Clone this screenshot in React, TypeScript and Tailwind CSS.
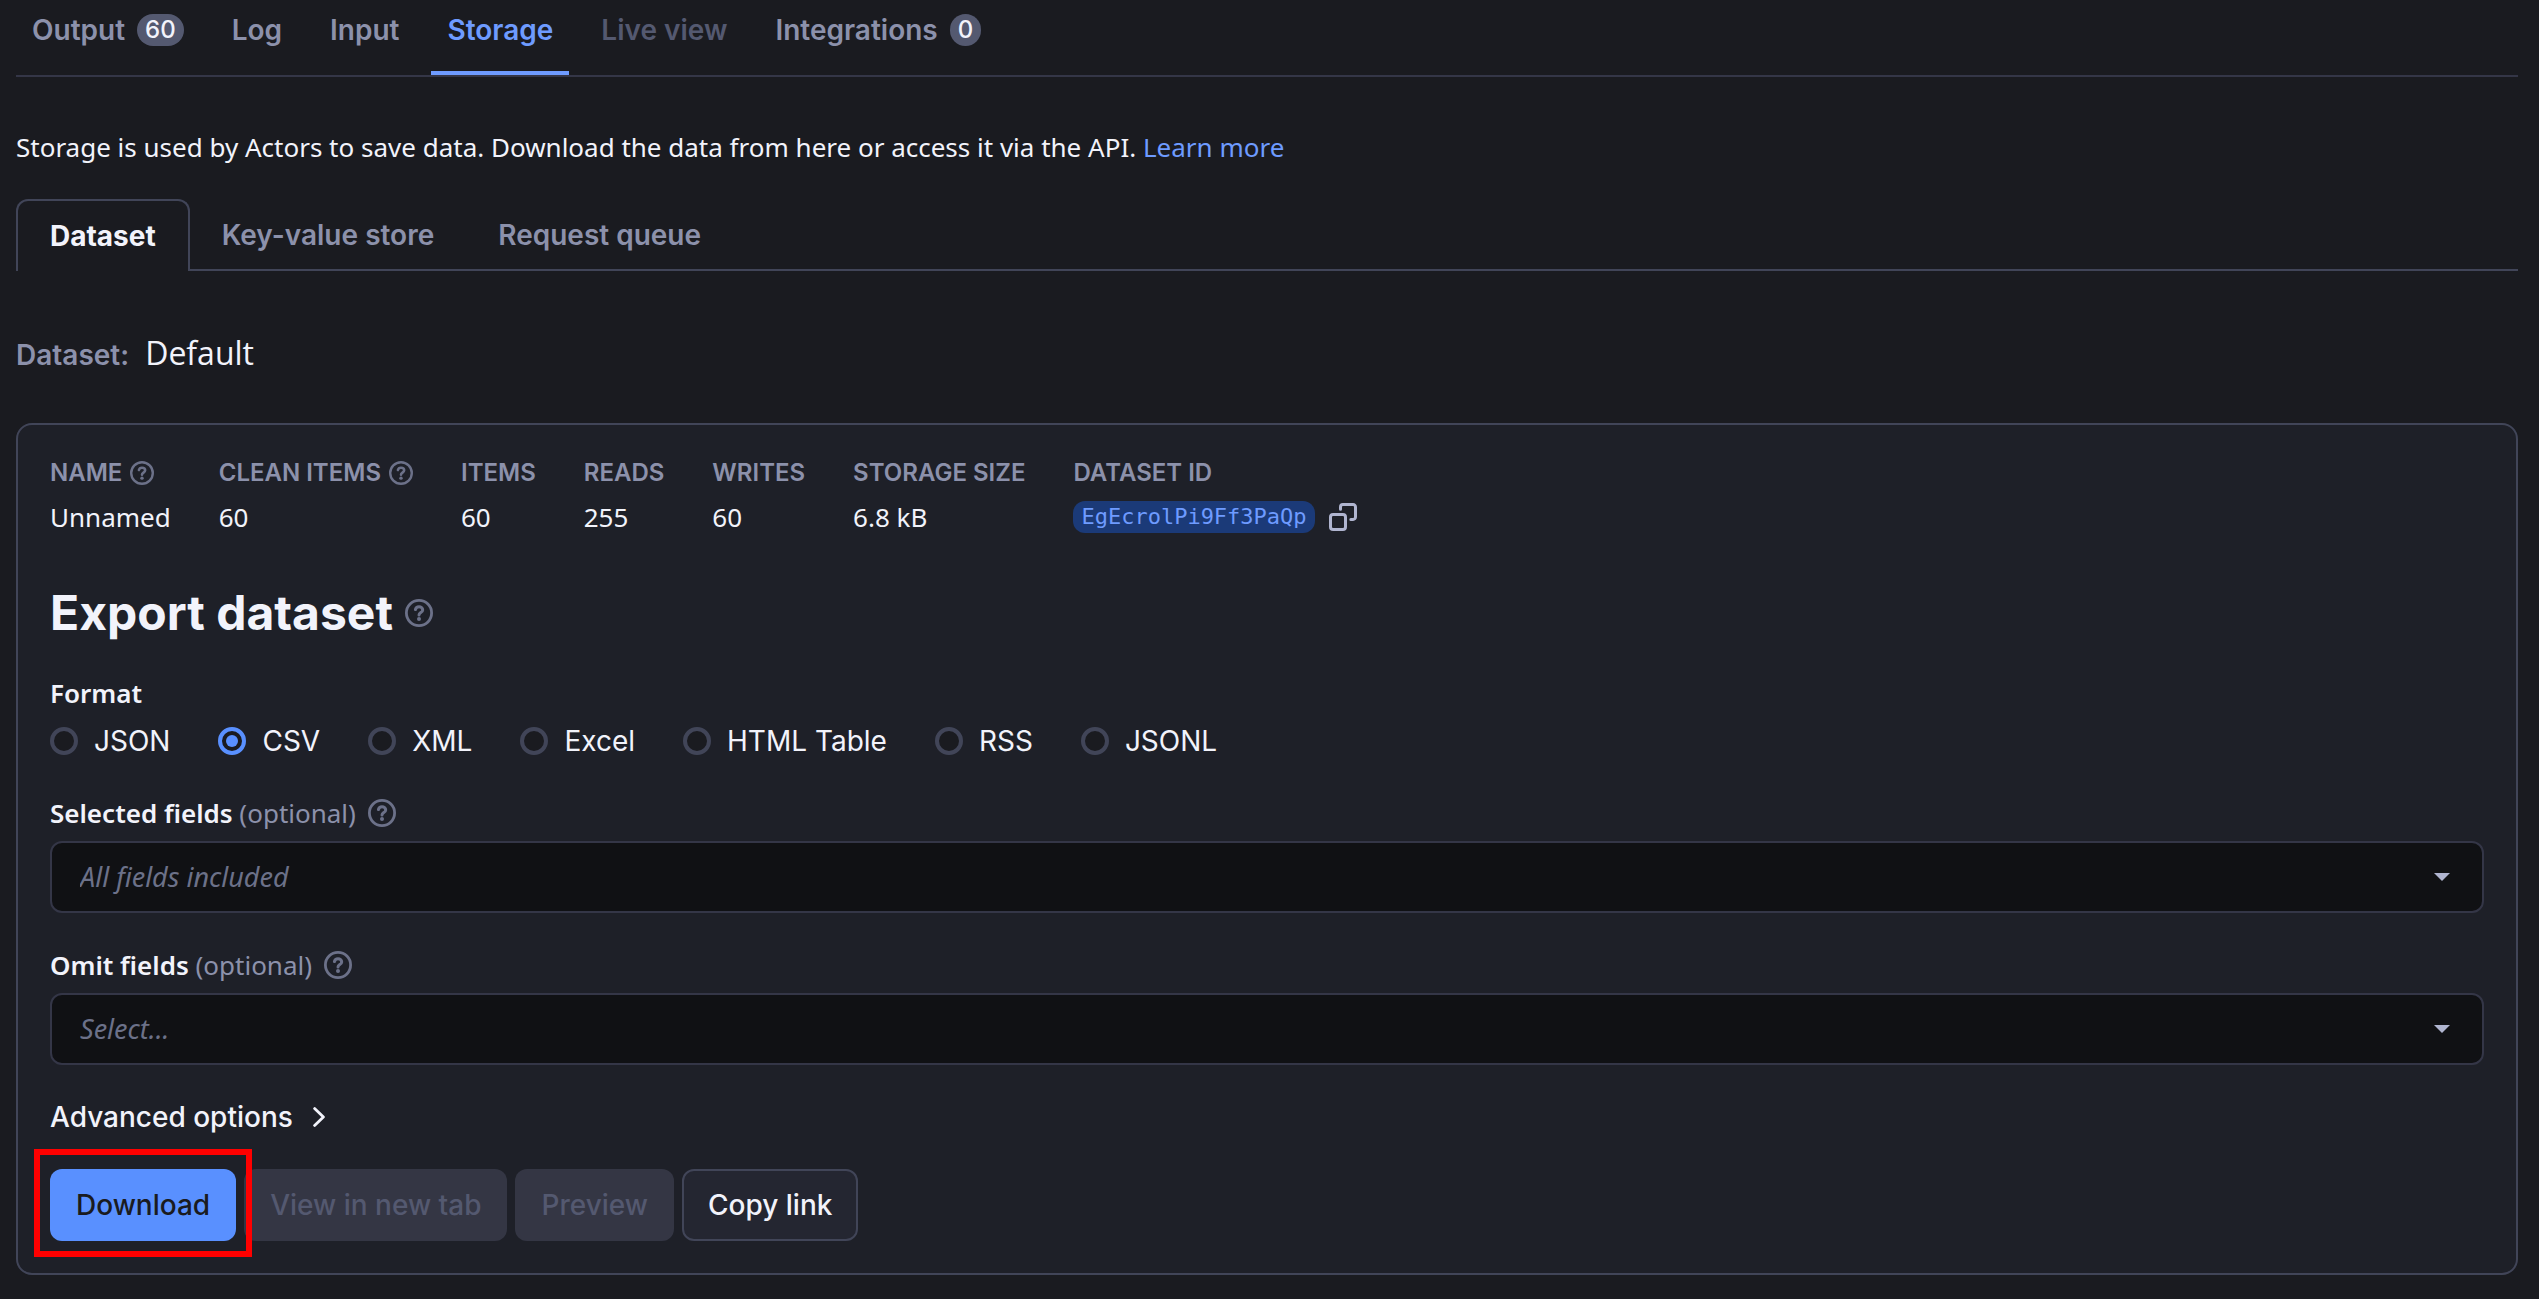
import type { ReactNode } from 'react';

type Tab = {
	label: string;
	count?: number;
	active?: boolean;
	disabled?: boolean;
};

type Stat = {
	label: string;
	value: string;
	help?: boolean;
};

const runTabs: Tab[] = [
	{ label: 'Output', count: 60 },
	{ label: 'Log' },
	{ label: 'Input' },
	{ label: 'Storage', active: true },
	{ label: 'Live view', disabled: true },
	{ label: 'Integrations', count: 0 },
];

const stats: Stat[] = [
	{ label: 'Name', value: 'Unnamed', help: true },
	{ label: 'Clean items', value: '60', help: true },
	{ label: 'Items', value: '60' },
	{ label: 'Reads', value: '255' },
	{ label: 'Writes', value: '60' },
	{ label: 'Storage size', value: '6.8 kB' },
];

const formats = ['JSON', 'CSV', 'XML', 'Excel', 'HTML Table', 'RSS', 'JSONL'];

function HelpIcon({ className }: { className: string }) {
	return (
		<svg
			viewBox="0 0 28 28"
			fill="none"
			stroke="currentColor"
			className={`shrink-0 text-[#6c7189] ${className}`}
			aria-hidden="true"
		>
			<circle cx="14" cy="14" r="12.6" strokeWidth="2.8" />
			<path
				d="M10.4 10.6c.4-1.8 1.8-2.8 3.6-2.8 2.1 0 3.7 1.3 3.7 3.1 0 2.6-3.7 2.7-3.7 5"
				strokeWidth="3"
				strokeLinecap="round"
			/>
			<circle cx="14" cy="20" r="2" fill="currentColor" stroke="none" />
		</svg>
	);
}

function CopyIcon() {
	return (
		<svg
			viewBox="0 0 28 28"
			fill="none"
			stroke="currentColor"
			strokeWidth="3"
			strokeLinecap="round"
			strokeLinejoin="round"
			className="h-7 w-7"
			aria-hidden="true"
		>
			<rect x="1.5" y="11.5" width="15" height="15" rx="2.6" />
			<path d="M11.5 6.2V3.9a2.4 2.4 0 0 1 2.4-2.4h10.2a2.4 2.4 0 0 1 2.4 2.4v10.2a2.4 2.4 0 0 1-2.4 2.4h-2.3" />
		</svg>
	);
}

function RunTab({ label, count, active, disabled }: Tab) {
	const color = active
		? 'border-[#6e9bff] text-[#6e9bff]'
		: disabled
			? 'border-transparent text-[#545970]'
			: 'border-transparent text-[#8c91ab]';

	return (
		<button
			type="button"
			role="tab"
			aria-selected={!!active}
			disabled={disabled}
			className={`flex h-[75px] items-start gap-3 border-b-4 px-4 pt-3 text-[28px] leading-9 font-semibold whitespace-nowrap ${color}`}
		>
			{label}
			{count !== undefined && (
				<span className="mt-0.5 rounded-full bg-[#545970] px-2 text-[24px] leading-8 font-medium text-[#f2f3fb]">
					{count}
				</span>
			)}
		</button>
	);
}

type FieldSelectProps = {
	id: string;
	label: string;
	placeholder: string;
};

function FieldSelect({ id, label, placeholder }: FieldSelectProps) {
	return (
		<div className="mt-8">
			<div className="flex h-10 items-center">
				<label htmlFor={id} className="font-[Noto_Sans,sans-serif] text-[26px] leading-10 text-[#8c91ab]">
					<span className="font-semibold text-[#f2f3fb]">{label}</span> (optional)
				</label>
				<HelpIcon className="ml-3 h-7 w-7" />
			</div>
			<div className="relative mt-2">
				<select
					id={id}
					defaultValue=""
					className="block h-18 w-full appearance-none rounded-xl border-2 border-[#343647] bg-[#101114] px-7 font-[Noto_Sans,sans-serif] text-[27px] text-[#6c7189] italic"
				>
					<option value="">{placeholder}</option>
				</select>
				<svg
					viewBox="0 0 16 8"
					className="pointer-events-none absolute inset-y-0 right-8.5 my-auto h-2 w-4 text-[#b0b5d0]"
					aria-hidden="true"
				>
					<path d="M0 0h16L8 8z" fill="currentColor" />
				</svg>
			</div>
		</div>
	);
}

function StatItem({ label, help, children }: { label: string; help?: boolean; children: ReactNode }) {
	return (
		<div>
			<dt className="flex h-8 items-center gap-2 text-[24px] leading-8 font-semibold whitespace-nowrap text-[#8c91ab] uppercase">
				{label}
				{help && <HelpIcon className="h-6 w-6" />}
			</dt>
			<dd className="mt-2 flex h-10 items-center gap-3.5 font-[Noto_Sans,sans-serif] text-[26px] leading-10">
				{children}
			</dd>
		</div>
	);
}

export default function App() {
	return (
		<main className="min-h-screen bg-[#1a1b20] pr-[21px] pl-4 font-[Inter,sans-serif] text-[28px] text-[#f2f3fb]">
			<div role="tablist" className="flex gap-4 border-b-2 border-[#343647]">
				{runTabs.map((tab) => (
					<RunTab key={tab.label} {...tab} />
				))}
			</div>

			<p className="mt-12.5 font-[Noto_Sans,sans-serif] text-[26px] leading-10">
				Storage is used by Actors to save data. Download the data from here or access it via the API.{' '}
				<a href="#" className="text-[#6e9bff]">
					Learn more
				</a>
			</p>

			<div role="tablist" className="mt-8 flex font-semibold">
				<button
					type="button"
					role="tab"
					aria-selected="true"
					className="h-18 rounded-t-xl border-2 border-b-0 border-[#414558] px-8 font-bold"
				>
					Dataset
				</button>
				<div className="flex flex-1 gap-16 border-b-2 border-[#414558] px-8 pt-0.5 text-[#8c91ab]">
					<button type="button" role="tab" aria-selected="false">
						Key-value store
					</button>
					<button type="button" role="tab" aria-selected="false">
						Request queue
					</button>
				</div>
			</div>

			<div className="mt-15.5 flex h-10 items-baseline gap-4">
				<span className="font-semibold text-[#8c91ab]">Dataset:</span>
				<span className="font-[Open_Sans,sans-serif] text-[32px] leading-10">Default</span>
			</div>

			<section className="mt-12.5 rounded-2xl border-2 border-[#414558] bg-[#1e2028] p-8">
				<dl className="flex gap-12">
					{stats.map(({ label, value, help }) => (
						<StatItem key={label} label={label} help={help}>
							{value}
						</StatItem>
					))}
					<StatItem label="Dataset ID">
						<code className="rounded-xl bg-[#1b3a78] px-2 font-[DejaVu_Sans_Mono,monospace] text-[22px] leading-8 text-[#6e9bff]">
							EgEcrolPi9Ff3PaQp
						</code>
						<button type="button" aria-label="Copy dataset ID" className="text-[#b0b5d0]">
							<CopyIcon />
						</button>
					</StatItem>
				</dl>

				<h2 className="mt-11 flex items-center gap-3 text-[48px] leading-16 font-bold">
					Export dataset
					<HelpIcon className="h-7 w-7" />
				</h2>

				<fieldset className="mt-7">
					<legend className="font-[Noto_Sans,sans-serif] text-[26px] leading-10 font-semibold">Format</legend>
					<div className="mt-2 flex gap-12">
						{formats.map((format) => (
							<label key={format} className="flex items-center gap-4 leading-10">
								<input
									type="radio"
									name="format"
									value={format}
									defaultChecked={format === 'CSV'}
									className="grid h-7 w-7 appearance-none place-items-center rounded-full border-4 border-[#414558] bg-[#1a1b20] before:h-3 before:w-3 before:rounded-full checked:border-[#5990ff] checked:before:bg-[#5990ff]"
								/>
								{format}
							</label>
						))}
					</div>
				</fieldset>

				<FieldSelect id="selected-fields" label="Selected fields" placeholder="All fields included" />
				<FieldSelect id="omit-fields" label="Omit fields" placeholder="Select..." />

				<button type="button" className="mt-8 flex items-center gap-5 leading-10 font-medium">
					Advanced options
					<svg
						viewBox="0 0 12 20"
						fill="none"
						stroke="currentColor"
						strokeWidth="2.8"
						strokeLinecap="round"
						strokeLinejoin="round"
						className="h-5 w-3"
						aria-hidden="true"
					>
						<path d="M1.6 1.6 10.4 10l-8.8 8.4" />
					</svg>
				</button>

				<div className="mt-8 flex gap-2 font-medium">
					<div className="relative">
						<button type="button" className="h-18 rounded-xl bg-[#5990ff] px-[26px] text-[#1a1b20]">
							Download
						</button>
						{/* highlight frame around the download button */}
						<div className="pointer-events-none absolute -inset-x-4 -top-5 -bottom-4 z-10 border-6 border-[#ff0000]" />
					</div>
					<button type="button" disabled className="h-18 rounded-xl bg-[#343644] px-[26px] text-[#545970]">
						View in new tab
					</button>
					<button type="button" disabled className="h-18 rounded-xl bg-[#343644] px-[26px] text-[#545970]">
						Preview
					</button>
					<button type="button" className="h-18 rounded-xl border-2 border-[#414558] bg-[#242631] px-6">
						Copy link
					</button>
				</div>
			</section>
		</main>
	);
}
